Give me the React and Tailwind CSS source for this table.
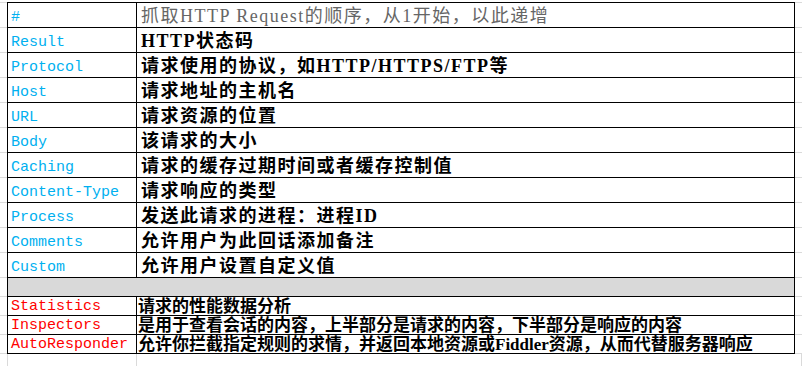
import React from "react";

const top = [
  ["#", "抓取HTTP Request的顺序，从1开始，以此递增"],
  ["Result", "HTTP状态码"],
  ["Protocol", "请求使用的协议，如HTTP/HTTPS/FTP等"],
  ["Host", "请求地址的主机名"],
  ["URL", "请求资源的位置"],
  ["Body", "该请求的大小"],
  ["Caching", "请求的缓存过期时间或者缓存控制值"],
  ["Content-Type", "请求响应的类型"],
  ["Process", "发送此请求的进程：进程ID"],
  ["Comments", "允许用户为此回话添加备注"],
  ["Custom", "允许用户设置自定义值"],
];

const tabs = [
  ["Statistics", "请求的性能数据分析"],
  ["Inspectors", "是用于查看会话的内容，上半部分是请求的内容，下半部分是响应的内容"],
  ["AutoResponder", "允许你拦截指定规则的求情，并返回本地资源或Fiddler资源，从而代替服务器响应"],
];

const mono = { fontFamily: '"Liberation Mono", "DejaVu Sans Mono", monospace' };
const cjk = { fontFamily: '"Liberation Serif", "Noto Sans CJK SC", serif' };

// one sheet row: light gridline margins + the black-bordered table part
const Row = ({ h, children, first }) => (
  <div className={`flex ${h}`}>
    <div className={`w-[7px] border-b border-[#dadada] ${first ? "border-t" : ""}`} />
    <div className={`w-[788px] flex border-x border-b border-black ${first ? "border-t" : ""}`}>
      {children}
    </div>
    <div className={`flex-1 border-b border-[#dadada] ${first ? "border-t" : ""}`} />
  </div>
);

export default function App() {
  return (
    <div className="w-[802px] h-[366px] bg-white overflow-hidden flex flex-col">
      <div className="h-[2px] shrink-0" />

      {top.map(([k, v], i) => (
        <Row key={k} h={i === 0 ? "h-[26px]" : "h-[25px]"} first={i === 0}>
          <div
            className="w-[129px] border-r border-black flex items-center pl-[3px] pt-[6px] text-[15px] text-[#00b0f0]"
            style={mono}
          >
            {k}
          </div>
          <div
            className={`flex-1 flex items-center pl-1 pt-px text-[18px] leading-none tracking-[1.5px] ${
              i === 0 ? "text-[#666666] font-normal" : "text-black font-semibold"
            }`}
            style={cjk}
          >
            {v}
          </div>
        </Row>
      ))}

      {/* gray separator row */}
      <Row h="h-[19px]">
        <div className="flex-1 bg-[#d9d9d9]" />
      </Row>

      {tabs.map(([k, v]) => (
        <Row key={k} h="h-[19px]">
          <div
            className="w-[129px] border-r border-black flex items-end pl-[3px] text-[15px] leading-[16px] text-[#ff0000]"
            style={mono}
          >
            {k}
          </div>
          <div
            className="flex-1 flex items-end pl-px text-[17px] leading-[17px] font-semibold text-black whitespace-nowrap"
            style={cjk}
          >
            {v}
          </div>
        </Row>
      ))}

      {/* empty sheet below the table */}
      <div className="flex-1 flex">
        <div className="w-[8px] border-r border-[#dadada]" />
        <div className="w-[129px] border-r border-[#dadada]" />
        <div className="flex-1 border-r border-[#dadada]" />
      </div>
    </div>
  );
}
